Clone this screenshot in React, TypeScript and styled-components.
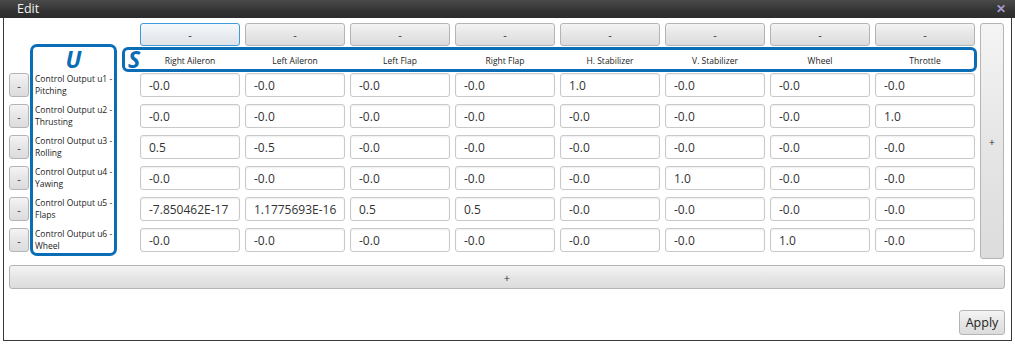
import React from "react";
import styled, { createGlobalStyle, css } from "styled-components";

const GlobalStyle = createGlobalStyle`
  html, body { margin: 0; padding: 0; background: #ffffff; }
  body { font-family: "Open Sans", "Noto Sans", sans-serif; }
  * { box-sizing: border-box; }
`;

const BLUE = "#0a6db5";

const Window = styled.div`
  width: 1015px;
  height: 345px;
  display: flex;
  flex-direction: column;
  background: #ffffff;
`;

const TitleBar = styled.div`
  height: 18px;
  flex: none;
  display: flex;
  align-items: center;
  justify-content: space-between;
  padding: 0 9px 0 17px;
  background: linear-gradient(#4a4a4a, #333333 60%, #2c2c2c);
  color: #f2f2f2;
  font-size: 12.5px;
  line-height: 18px;
`;

const Close = styled.span`
  color: #a99bcf;
  font-size: 12px;
  font-weight: bold;
  line-height: 1;
  margin-top: -1px;
`;

const Body = styled.div`
  flex: 1;
  margin: 0 3px 4px 3px;
  border: 1px solid #3a3a3a;
  border-top: none;
  padding: 5px 6px 5px 5px;
  display: flex;
  flex-direction: column;
`;

const Grid = styled.div`
  position: relative;
  display: grid;
  grid-template-columns: 20px 101px repeat(8, 100px) 24px;
  grid-template-rows: 23px 27px repeat(6, 31px);
  column-gap: 5px;
`;

const buttonLook = css`
  border: 1px solid #b4b4b4;
  border-radius: 3px;
  background: linear-gradient(#f4f4f4, #e6e6e6 50%, #dcdcdc);
  color: #333;
  font-family: "Open Sans", sans-serif;
  padding: 0;
  display: flex;
  align-items: center;
  justify-content: center;
`;

const HeadButton = styled.div<{ $focused?: boolean }>`
  ${buttonLook};
  height: 23px;
  font-size: 11px;
  ${(p) =>
    p.$focused &&
    css`
      border-color: #3f9ad9;
      background: linear-gradient(#f6f9fc, #e9edf1 50%, #dfe3e7);
    `}
`;

const SideButton = styled.div`
  ${buttonLook};
  grid-column: 11;
  grid-row: 1 / -1;
  height: 236px;
  font-size: 11px;
`;

const RowButton = styled.div`
  ${buttonLook};
  width: 20px;
  height: 24px;
  font-size: 11px;
`;

const ColLabel = styled.div`
  align-self: center;
  text-align: center;
  font-size: 8.5px;
  color: #222;
  padding-top: 1px;
`;

const RowLabel = styled.div`
  height: 24px;
  padding-left: 1px;
  font-size: 8.5px;
  line-height: 12px;
  color: #222;
  white-space: nowrap;
`;

const Cell = styled.div`
  height: 24px;
  border: 1px solid #c9c9c9;
  border-radius: 3px;
  background: #fff;
  box-shadow: inset 0 1px 2px rgba(0, 0, 0, 0.07);
  padding-left: 8px;
  display: flex;
  align-items: center;
  font-size: 12px;
  color: #333;
`;

const Outline = styled.div`
  position: absolute;
  border: 3px solid ${BLUE};
  border-radius: 7px;
  pointer-events: none;
`;

const UBox = styled(Outline)`
  left: 21px;
  top: 21px;
  width: 87px;
  height: 212px;
  display: flex;
  justify-content: center;
  padding-top: 2px;
`;

const SBox = styled(Outline)`
  left: 113px;
  top: 24px;
  width: 855px;
  height: 25px;
  border-radius: 6px;
  padding-left: 3px;
  display: flex;
  align-items: center;
`;

const Letter = styled.span`
  color: ${BLUE};
  font-family: "Open Sans", sans-serif;
  font-weight: 700;
  font-style: italic;
  font-size: 23px;
  line-height: 21px;
`;

const WideButton = styled.div`
  ${buttonLook};
  margin-top: 6px;
  height: 24px;
  font-size: 11px;
`;

const Footer = styled.div`
  margin-top: auto;
  display: flex;
  justify-content: flex-end;
`;

const ApplyButton = styled.div`
  ${buttonLook};
  width: 46px;
  height: 25px;
  font-size: 12.5px;
  color: #222;
`;

const columns = [
  "Right Aileron",
  "Left Aileron",
  "Left Flap",
  "Right Flap",
  "H. Stabilizer",
  "V. Stabilizer",
  "Wheel",
  "Throttle",
];

const rows: { id: string; name: string; values: string[] }[] = [
  { id: "u1", name: "Pitching", values: ["-0.0", "-0.0", "-0.0", "-0.0", "1.0", "-0.0", "-0.0", "-0.0"] },
  { id: "u2", name: "Thrusting", values: ["-0.0", "-0.0", "-0.0", "-0.0", "-0.0", "-0.0", "-0.0", "1.0"] },
  { id: "u3", name: "Rolling", values: ["0.5", "-0.5", "-0.0", "-0.0", "-0.0", "-0.0", "-0.0", "-0.0"] },
  { id: "u4", name: "Yawing", values: ["-0.0", "-0.0", "-0.0", "-0.0", "-0.0", "1.0", "-0.0", "-0.0"] },
  { id: "u5", name: "Flaps", values: ["-7.850462E-17", "1.1775693E-16", "0.5", "0.5", "-0.0", "-0.0", "-0.0", "-0.0"] },
  { id: "u6", name: "Wheel", values: ["-0.0", "-0.0", "-0.0", "-0.0", "-0.0", "-0.0", "1.0", "-0.0"] },
];

export default function App() {
  return (
    <Window>
      <GlobalStyle />
      <TitleBar>
        <span>Edit</span>
        <Close>✕</Close>
      </TitleBar>
      <Body>
        <Grid>
          <div />
          <div />
          {columns.map((c, i) => (
            <HeadButton key={c} $focused={i === 0}>-</HeadButton>
          ))}
          <SideButton>+</SideButton>
          <div />
          <div />
          {columns.map((c) => (
            <ColLabel key={c}>{c}</ColLabel>
          ))}
          {rows.map((r) => (
            <React.Fragment key={r.id}>
              <RowButton>-</RowButton>
              <RowLabel>
                Control Output {r.id} -<br />
                {r.name}
              </RowLabel>
              {r.values.map((v, i) => (
                <Cell key={i}>{v}</Cell>
              ))}
            </React.Fragment>
          ))}
          <UBox>
            <Letter>U</Letter>
          </UBox>
          <SBox>
            <Letter>S</Letter>
          </SBox>
        </Grid>
        <WideButton>+</WideButton>
        <Footer>
          <ApplyButton>Apply</ApplyButton>
        </Footer>
      </Body>
    </Window>
  );
}
